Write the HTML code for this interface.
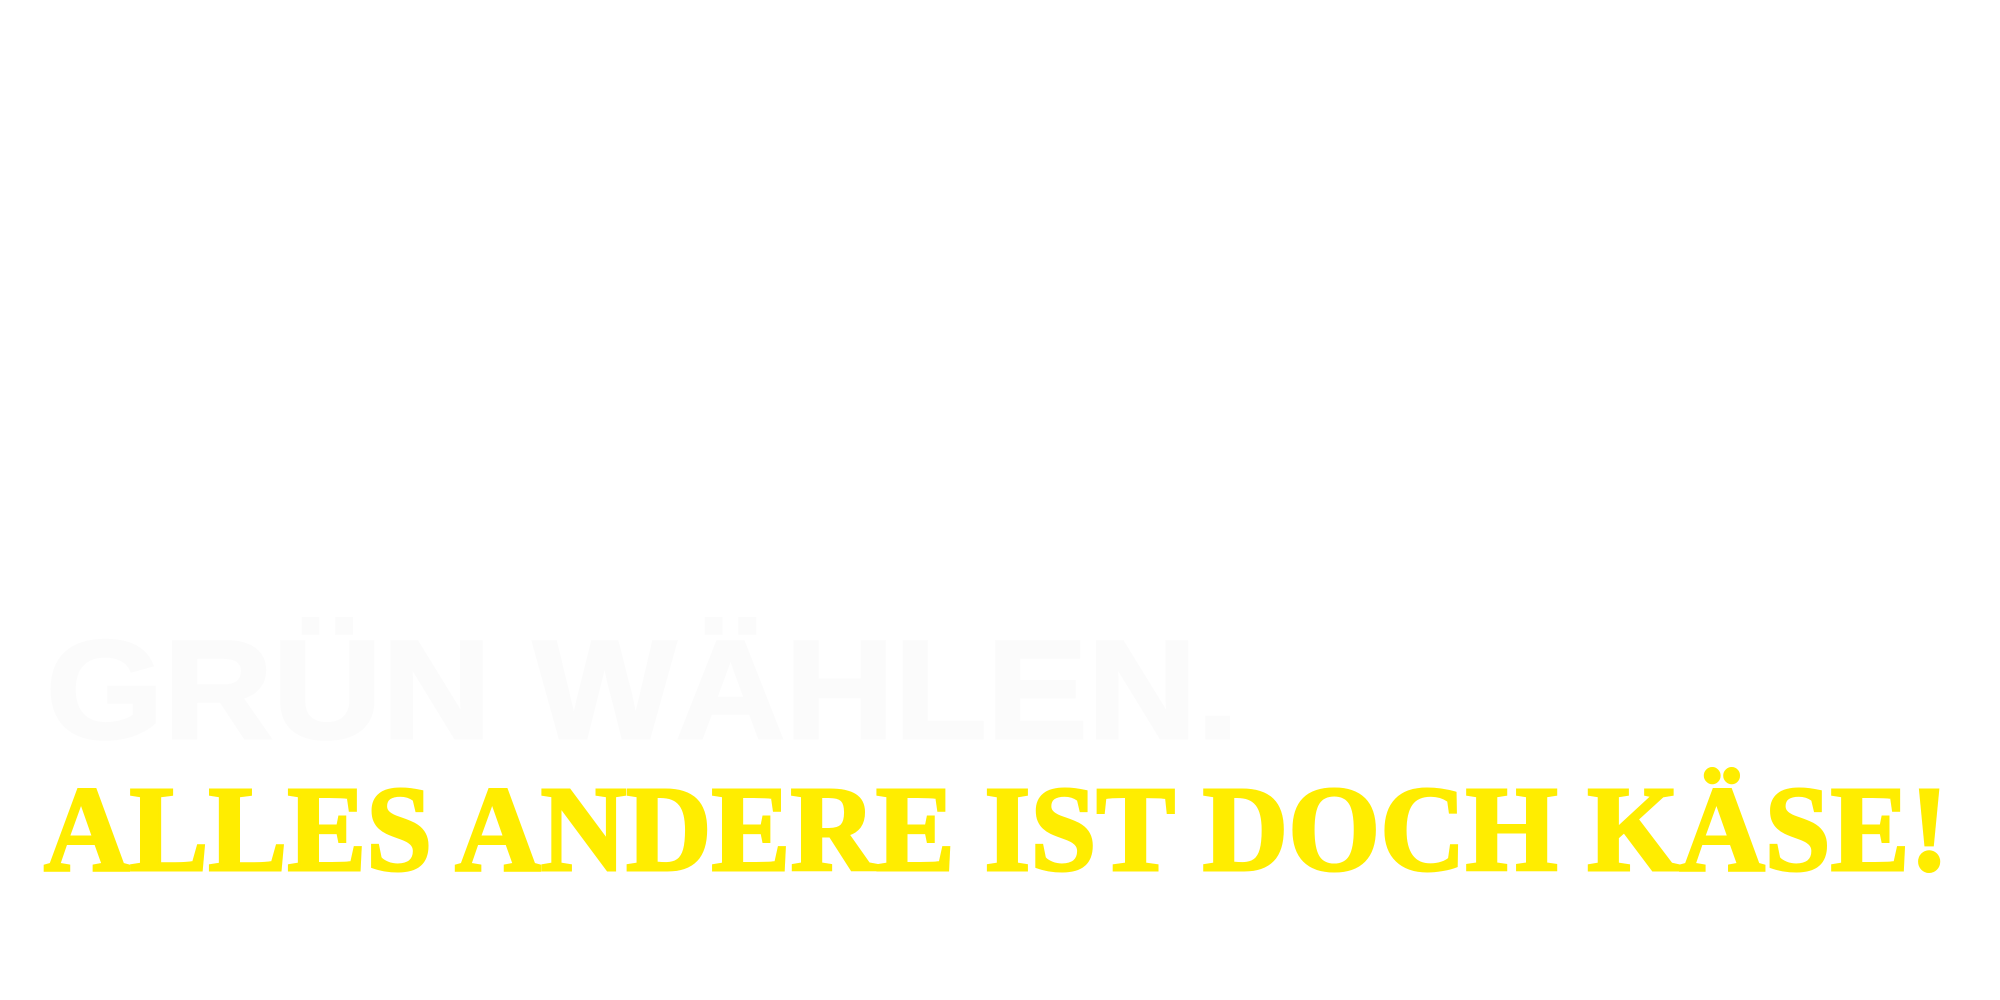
<!DOCTYPE html>
<html><head><meta charset="utf-8"><style>
html,body{margin:0;padding:0;background:#fff;width:2000px;height:1000px;overflow:hidden;position:relative}
.t{position:absolute;white-space:nowrap;line-height:1;transform-origin:0 0}
.h{left:46px;top:620px;font-family:"Liberation Sans",sans-serif;font-weight:bold;font-size:140px;color:#fbfbfb;transform:scaleX(1.08);-webkit-text-stroke:3px #fbfbfb}
.y{left:44px;top:769px;font-family:"Liberation Serif",serif;font-weight:bold;font-size:122px;color:#ffed00;transform:scaleX(0.97);-webkit-text-stroke:3px #ffed00}
</style></head><body>
<div class="t h">GRÜN WÄHLEN.</div>
<div class="t y">ALLES ANDERE IST DOCH KÄSE!</div>
</body></html>
